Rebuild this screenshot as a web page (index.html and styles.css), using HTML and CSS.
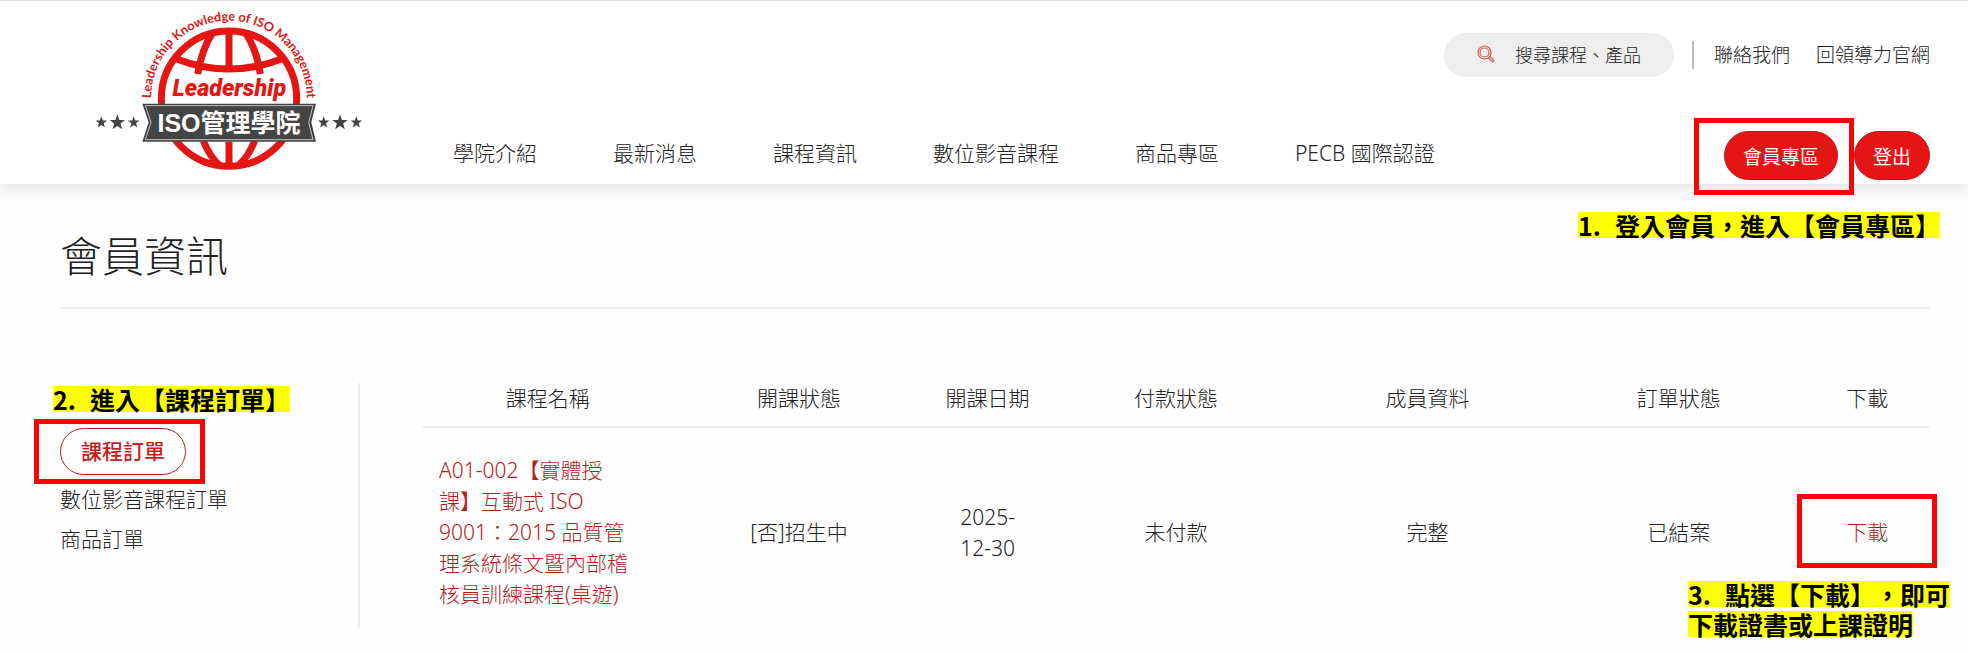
FILE: index.html
```html
<!DOCTYPE html>
<html lang="zh-Hant">
<head>
  <meta charset="UTF-8">
  <title>會員資訊</title>
  <link rel="stylesheet" href="styles.css">
</head>
<body>

  <header class="header">
    <a class="logo" href="#" aria-label="Leadership ISO管理學院">
      <svg width="300" height="183" viewBox="0 3 900 549">
        <defs>
          <path id="arc" d="M213 296 A234 234 0 0 1 681 296" />
          <polygon id="star" points="0,-20 5,-6 19,-6 8,3 12,17 0,9 -12,17 -8,3 -19,-6 -5,-6" />
        </defs>
        <g fill="none" stroke="#e41513" stroke-width="21">
          <circle cx="447" cy="296" r="203" />
          <path d="M447 92 V212 M447 425 V500" />
          <path d="M288 176 Q447 238 607 176" />
          <path d="M398 98 Q366 145 353 222 M496 98 Q529 145 541 222" />
          <path d="M370 422 Q388 468 418 496 M524 422 Q506 468 476 496" />
        </g>
        <text class="logo-arc"><textPath href="#arc" startOffset="50%">Leadership Knowledge of ISO Management</textPath></text>
        <text class="logo-name" x="448" y="288">Leadership</text>
        <path d="M187 311 H708 L694 367 L708 425 H187 L206 367 Z" fill="#444" />
        <path d="M196 317 H699 L686 367 L699 419 H196 L213 367 Z" fill="none" stroke="#fff" stroke-width="2" />
        <text class="logo-school" x="447" y="395">ISO管理學院</text>
        <g fill="#444">
          <use href="#star" transform="translate(64 367) scale(.9)" />
          <use href="#star" transform="translate(112 367) scale(1.2)" />
          <use href="#star" transform="translate(161 367) scale(.9)" />
          <use href="#star" transform="translate(731 367) scale(.9)" />
          <use href="#star" transform="translate(780 367) scale(1.2)" />
          <use href="#star" transform="translate(829 367) scale(.9)" />
        </g>
      </svg>
    </a>

    <div class="header-main">
      <div class="header-top">
        <label class="search">
          <svg width="18" height="20" viewBox="0 0 18 20" fill="none" stroke="#e05555" stroke-width="1.2">
            <circle cx="7.5" cy="7.5" r="6.5" />
            <circle cx="7.5" cy="7.5" r="4.5" />
            <path d="M11.5 13 L15 16.5 Q16 17 16.5 16 Q17 15.500 16.500 15 L13 11.500" />
          </svg>
          <input type="text" placeholder="搜尋課程、產品" aria-label="搜尋課程、產品">
        </label>
        <div class="top-links">
          <a href="#">聯絡我們</a>
          <a href="#">回領導力官網</a>
        </div>
      </div>

      <div class="header-bottom">
        <nav class="nav">
          <a href="#">學院介紹</a>
          <a href="#">最新消息</a>
          <a href="#">課程資訊</a>
          <a href="#">數位影音課程</a>
          <a href="#">商品專區</a>
          <a href="#">PECB 國際認證</a>
        </nav>
        <div class="member">
          <div class="step step-member">
            <button type="button" class="btn">會員專區</button>
            <p class="note"><mark><span class="num">1.</span>登入會員，進入【會員專區】</mark></p>
          </div>
          <button type="button" class="btn">登出</button>
        </div>
      </div>
    </div>
  </header>

  <main class="page">
    <h1>會員資訊</h1>

    <div class="content">
      <aside class="sidebar">
        <div class="step step-order">
          <p class="note"><mark><span class="num">2.</span>進入【課程訂單】</mark></p>
          <a class="current" href="#">課程訂單</a>
        </div>
        <a href="#">數位影音課程訂單</a>
        <a href="#">商品訂單</a>
      </aside>

      <table class="orders">
        <colgroup>
          <col class="wide"><col class="wide"><col><col class="wide"><col class="wide"><col class="wide"><col>
        </colgroup>
        <thead>
          <tr>
            <th>課程名稱</th>
            <th>開課狀態</th>
            <th>開課日期</th>
            <th>付款狀態</th>
            <th>成員資料</th>
            <th>訂單狀態</th>
            <th>下載</th>
          </tr>
        </thead>
        <tbody>
          <tr>
            <td class="course"><a href="#">A01-002【實體授課】互動式 ISO 9001：2015 品質管理系統條文暨內部稽核員訓練課程(桌遊)</a></td>
            <td>[否]招生中</td>
            <td>2025-12-30</td>
            <td>未付款</td>
            <td>完整</td>
            <td>已結案</td>
            <td>
              <div class="step step-download">
                <a href="#">下載</a>
                <p class="note"><mark><span class="num">3.</span>點選【下載】，即可<br>下載證書或上課證明</mark></p>
              </div>
            </td>
          </tr>
        </tbody>
      </table>
    </div>
  </main>

</body>
</html>
```
FILE: styles.css
```css
* {
  box-sizing: border-box;
}

body {
  margin: 0;
  background-color: #fefefe;
  color: #222;
  font-family: "Noto Sans", "Noto Sans CJK TC", sans-serif;
  font-size: 21px;
  font-weight: 300;
  line-height: 31px;
  text-spacing-trim: space-all;
}

a {
  color: inherit;
  text-decoration: none;
}

/* header */
.header {
  display: flex;
  padding: 0 38px 0 80px;
  border-top: 1px solid #ddd;
  background-color: white;
  box-shadow: 0 2px 18px rgba(0, 0, 0, 0.14);
}

.logo svg {
  display: block;
}

.logo-arc {
  fill: #e41513;
  font-family: Lato, sans-serif;
  font-size: 38px;
  font-weight: 700;
  text-anchor: middle;
}

.logo-name {
  fill: #e41513;
  font-family: Roboto, sans-serif;
  font-size: 70px;
  font-style: italic;
  font-weight: 900;
  text-anchor: middle;
}

.logo-school {
  fill: white;
  font-family: "Liberation Sans", "Noto Sans CJK TC", sans-serif;
  font-size: 75px;
  font-weight: 700;
  text-anchor: middle;
}

.header-main {
  flex: 1;
  display: flex;
  flex-direction: column;
  justify-content: space-between;
  padding: 32px 0 4px 73px;
}

.header-top {
  display: flex;
  align-items: center;
  justify-content: flex-end;
  font-size: 19px;
}

.search {
  display: flex;
  align-items: center;
  gap: 20px;
  width: 230px;
  height: 44px;
  padding: 0 20px 0 33px;
  border-radius: 22px;
  background-color: #eee;
}

.search svg {
  flex: none;
}

.search input {
  width: 100%;
  padding: 0;
  border: none;
  outline: none;
  background: none;
  color: #222;
  font: inherit;
  font-size: 18px;
}

.search input::placeholder {
  color: #222;
  opacity: 1;
}

.top-links {
  display: flex;
  gap: 26px;
  margin-left: 18px;
  padding-left: 20px;
  border-left: 2px solid #bbb;
  line-height: 28px;
}

.header-bottom {
  display: flex;
  align-items: center;
  justify-content: space-between;
}

.nav {
  display: flex;
  gap: 76px;
  margin-bottom: 4px;
}

.member {
  display: flex;
  gap: 16px;
}

.btn {
  height: 49px;
  padding: 0 18px;
  border: 1px solid #b71c1c;
  border-radius: 25px;
  background-color: #e61414;
  color: white;
  font-family: inherit;
  font-size: 19px;
  font-weight: 400;
  cursor: pointer;
}

/* page */
.page {
  padding: 48px 38px 26px 60px;
}

h1 {
  margin: 0 0 74px;
  padding-bottom: 27px;
  border-bottom: 2px solid #eee;
  font-size: 42px;
  font-weight: 300;
  line-height: 48px;
}

.content {
  display: flex;
  gap: 62px;
}

.sidebar {
  display: flex;
  flex-direction: column;
  align-items: flex-start;
  gap: 9px;
  width: 300px;
  padding-top: 45px;
  border-right: 2px solid #eee;
}

.current {
  display: block;
  padding: 7px 20px;
  border: 1px solid #b71c1c;
  border-radius: 24px;
  color: #c81e1e;
  font-weight: 500;
}

.orders {
  flex: 1;
  border-collapse: collapse;
  table-layout: fixed;
  text-align: center;
}

.orders col {
  width: 8.33%;
}

.orders col.wide {
  width: 16.67%;
}

.orders th {
  padding: 0 0 12px;
  border-bottom: 2px solid #eee;
  font-weight: 300;
}

.orders td {
  padding: 27px 24px 18px;
}

.orders td.course {
  padding-right: 42px;
  padding-left: 17px;
  text-align: left;
}

.orders a {
  color: #b71c1c;
}

/* step marks laid over the page */
.step {
  position: relative;
}

.step::before {
  content: "";
  position: absolute;
  border: 5px solid red;
  pointer-events: none;
}

.step-member::before {
  inset: -13px -16px -15px -30px;
}

.step-order::before {
  inset: -9px -19px -9px -26px;
}

.step-download::before {
  inset: -23px -31px -20px;
}

.note {
  position: absolute;
  margin: 0;
  font-family: "Noto Sans CJK TC", sans-serif;
  font-size: 25px;
  font-weight: 700;
  line-height: 30px;
  text-align: left;
  white-space: nowrap;
}

.note mark {
  background: linear-gradient(yellow, yellow) center / 100% 26px no-repeat;
  color: black;
  -webkit-box-decoration-break: clone;
  box-decoration-break: clone;
}

.num {
  padding-right: 14px;
}

.step-member .note {
  top: 79px;
  right: -102px;
}

.step-order .note {
  top: -44px;
  left: -7px;
}

.step-download .note {
  top: 62px;
  right: -44px;
}
```
